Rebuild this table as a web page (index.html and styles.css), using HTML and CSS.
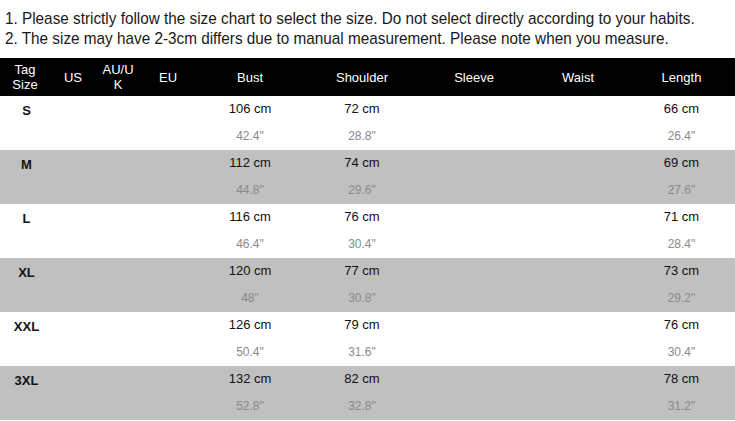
FILE: index.html
```html
<!DOCTYPE html>
<html>
<head>
<meta charset="utf-8">
<link rel="stylesheet" href="styles.css">
</head>
<body>
<div class="notes">
  <p class="note">1. Please strictly follow the size chart to select the size. Do not select directly according to your habits.</p>
  <p class="note">2. The size may have 2-3cm differs due to manual measurement. Please note when you measure.</p>
</div>
<div class="chart">
  <div class="row head">
    <div class="cell"><span>Tag<br>Size</span></div>
    <div class="cell">US</div>
    <div class="cell"><span>AU/U<br>K</span></div>
    <div class="cell">EU</div>
    <div class="cell">Bust</div>
    <div class="cell">Shoulder</div>
    <div class="cell">Sleeve</div>
    <div class="cell">Waist</div>
    <div class="cell">Length</div>
  </div>

  <div class="row size">
    <div class="cell tag">S</div><div class="cell"></div><div class="cell"></div><div class="cell"></div>
    <div class="cell m"><span class="cm">106 cm</span><span class="in">42.4"</span></div>
    <div class="cell m"><span class="cm">72 cm</span><span class="in">28.8"</span></div>
    <div class="cell m"></div><div class="cell m"></div>
    <div class="cell m"><span class="cm">66 cm</span><span class="in">26.4"</span></div>
  </div>
  <div class="row size alt">
    <div class="cell tag">M</div><div class="cell"></div><div class="cell"></div><div class="cell"></div>
    <div class="cell m"><span class="cm">112 cm</span><span class="in">44.8"</span></div>
    <div class="cell m"><span class="cm">74 cm</span><span class="in">29.6"</span></div>
    <div class="cell m"></div><div class="cell m"></div>
    <div class="cell m"><span class="cm">69 cm</span><span class="in">27.6"</span></div>
  </div>
  <div class="row size">
    <div class="cell tag">L</div><div class="cell"></div><div class="cell"></div><div class="cell"></div>
    <div class="cell m"><span class="cm">116 cm</span><span class="in">46.4"</span></div>
    <div class="cell m"><span class="cm">76 cm</span><span class="in">30.4"</span></div>
    <div class="cell m"></div><div class="cell m"></div>
    <div class="cell m"><span class="cm">71 cm</span><span class="in">28.4"</span></div>
  </div>
  <div class="row size alt">
    <div class="cell tag">XL</div><div class="cell"></div><div class="cell"></div><div class="cell"></div>
    <div class="cell m"><span class="cm">120 cm</span><span class="in">48"</span></div>
    <div class="cell m"><span class="cm">77 cm</span><span class="in">30.8"</span></div>
    <div class="cell m"></div><div class="cell m"></div>
    <div class="cell m"><span class="cm">73 cm</span><span class="in">29.2"</span></div>
  </div>
  <div class="row size">
    <div class="cell tag">XXL</div><div class="cell"></div><div class="cell"></div><div class="cell"></div>
    <div class="cell m"><span class="cm">126 cm</span><span class="in">50.4"</span></div>
    <div class="cell m"><span class="cm">79 cm</span><span class="in">31.6"</span></div>
    <div class="cell m"></div><div class="cell m"></div>
    <div class="cell m"><span class="cm">76 cm</span><span class="in">30.4"</span></div>
  </div>
  <div class="row size alt">
    <div class="cell tag">3XL</div><div class="cell"></div><div class="cell"></div><div class="cell"></div>
    <div class="cell m"><span class="cm">132 cm</span><span class="in">52.8"</span></div>
    <div class="cell m"><span class="cm">82 cm</span><span class="in">32.8"</span></div>
    <div class="cell m"></div><div class="cell m"></div>
    <div class="cell m"><span class="cm">78 cm</span><span class="in">31.2"</span></div>
  </div>
</div>
</body>
</html>
```
FILE: styles.css
```css
html, body {
  margin: 0;
  padding: 0;
  background: #fff;
}
body {
  font-family: "Liberation Sans", Arial, sans-serif;
  color: #111;
  width: 735px;
  height: 421px;
  overflow: hidden;
}
.notes {
  padding: 9px 0 0 5px;
  height: 58px;
  box-sizing: border-box;
}
.note {
  margin: 0;
  font-size: 17px;
  line-height: 20px;
  white-space: nowrap;
  color: #1a1a1a;
  transform: scaleX(0.9);
  transform-origin: left center;
}
.chart {
  display: flex;
  flex-direction: column;
}
.row {
  display: grid;
  grid-template-columns: 50px 46px 44px 56px 108px 116px 108px 100px 107px;
}
.head {
  background: #000;
  color: #fff;
  height: 38px;
  font-size: 13px;
  line-height: 15px;
}
.head .cell {
  display: flex;
  align-items: center;
  justify-content: center;
  text-align: center;
}
.size {
  height: 54px;
  background: #fff;
}
.size.alt {
  background: #c0c0c0;
}
.tag {
  font-weight: bold;
  font-size: 13px;
  text-align: center;
  padding-top: 7px;
  line-height: 15px;
  padding-left: 3px;
}
.m {
  display: flex;
  flex-direction: column;
  align-items: center;
  padding-top: 5px;
}
.cm {
  font-size: 13px;
  line-height: 15px;
  color: #111;
}
.in {
  font-size: 12px;
  line-height: 15px;
  margin-top: 13px;
  color: #8a8a8a;
}
```
